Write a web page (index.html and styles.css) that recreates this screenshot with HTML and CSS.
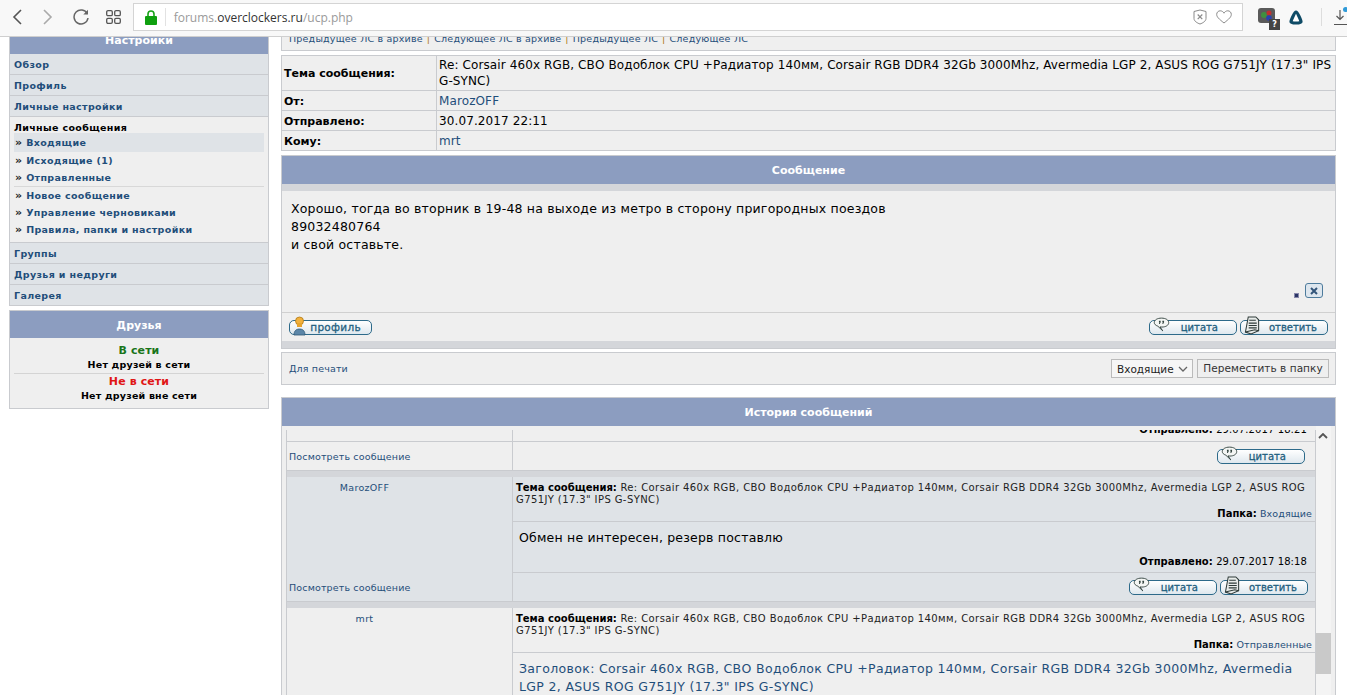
FILE: index.html
```html
<!DOCTYPE html>
<html lang="ru">
<head>
<meta charset="utf-8">
<title>forums.overclockers.ru/ucp.php</title>
<link rel="stylesheet" href="styles.css">
</head>
<body>
<svg class="defs" width="0" height="0" aria-hidden="true">
  <defs>
    <symbol id="i-quote" viewBox="0 0 20 17">
      <path d="M10 1c5 0 8.500 2.200 8.500 5.300S15 11.500 10.500 11.500c-.8 0-1.500 0-2.200-.2l3.200 4.700-5.800-5.500C3 9.500 1.500 8 1.500 6.300 1.500 3.200 5 1 10 1z" fill="#f4f6f4" stroke="#33443f" stroke-width="1.100"/>
      <path d="M7 4h2v2l-1 2H7l.5-2H7zM11 4h2v2l-1 2h-1l.5-2H11z" fill="#33443f"/>
    </symbol>
    <symbol id="i-reply" viewBox="0 0 18 20">
      <path d="M4.500 1h8l3 3v11.500l-8 3.500-6-2z" fill="#e9ecea" stroke="#2e3a38" stroke-width="1.100"/>
      <path d="M5.500 4.500h7M5 7.500h8.500M5 10h8.500M5 12.500h8.500" stroke="#2e3a38" stroke-width="1.100"/>
      <path d="M1.500 17l10-2.500 4 1" fill="none" stroke="#2e3a38" stroke-width="1.100"/>
    </symbol>
  </defs>
</svg>

<header class="chrome">
  <div class="nav">
    <svg class="nav-ico" width="14" height="16" viewBox="0 0 14 16"><path d="M11 1L4 8l7 7" fill="none" stroke="#555" stroke-width="1.600"/></svg>
    <svg class="nav-ico" width="14" height="16" viewBox="0 0 14 16"><path d="M3 1l7 7-7 7" fill="none" stroke="#aaa" stroke-width="1.600"/></svg>
    <svg class="nav-ico" width="16" height="16" viewBox="0 0 16 16"><path d="M14.300 4.800A7 7 0 1 0 15 9" fill="none" stroke="#666" stroke-width="1.500"/><path d="M15 .8v4.700h-4.700z" fill="#666"/></svg>
    <svg class="nav-ico" width="15" height="14" viewBox="0 0 15 14"><g fill="none" stroke="#555" stroke-width="1.300"><rect x=".7" y=".7" width="5.600" height="5" rx="1.300"/><rect x="8.700" y=".7" width="5.600" height="5" rx="1.300"/><rect x=".7" y="8.300" width="5.600" height="5" rx="1.300"/><rect x="8.700" y="8.300" width="5.600" height="5" rx="1.300"/></g></svg>
  </div>
  <div class="omnibox">
    <svg class="lock" width="12" height="15" viewBox="0 0 12 15"><path d="M3 7V4a3 3 0 0 1 6 0v3" fill="none" stroke="#18a318" stroke-width="1.600"/><rect y="6" width="12" height="9" rx="1" fill="#0fa00f"/></svg>
    <span class="omni-sep"></span>
    <span class="url">forums.<b>overclockers.ru</b>/ucp.php</span>
    <svg class="shield" width="14" height="16" viewBox="0 0 14 16"><path d="M1 2.500l6-1.500 6 1.500v7c0 2.500-3 4.500-6 5.500-3-1-6-3-6-5.500z" fill="none" stroke="#8a8a8a"/><path d="M4.700 5.500l4.600 4.600M9.300 5.500l-4.600 4.600" stroke="#8a8a8a" stroke-width="1.200"/></svg>
    <svg class="heart" width="16" height="14" viewBox="0 0 16 14"><path d="M8 13C3 9 .7 7 .7 4.400 .7 2.300 2.300.8 4.200.8 5.800.8 7.200 1.700 8 3.200 8.800 1.700 10.200.8 11.800.8c1.900 0 3.500 1.500 3.500 3.600C15.300 7 13 9 8 13z" fill="none" stroke="#8a8a8a"/></svg>
  </div>
  <div class="tools">
    <span class="ext">
      <svg width="17" height="16" viewBox="0 0 17 16"><rect width="17" height="15" rx="3" fill="#5a5a5a"/><circle cx="6" cy="7" r="3" fill="#3f8f3f"/><circle cx="11" cy="5" r="2.500" fill="#c03030"/><circle cx="11" cy="10" r="2.800" fill="#2840b0"/></svg>
      <span class="ext-badge">?</span>
    </span>
    <svg class="alice" width="14" height="15" viewBox="0 0 14 15"><path d="M7 2.200C5.500 2.200 2 10.500 2 11.800c0 .8 2 1.200 5 1.200s5-.4 5-1.200C12 10.500 8.500 2.200 7 2.200z" fill="#fff" stroke="#0f4b66" stroke-width="3.200" stroke-linejoin="round"/></svg>
    <span class="tool-sep"></span>
    <span class="dl">
      <svg width="14" height="17" viewBox="0 0 14 17"><path d="M7 1v9M3.500 7L7 10.500 10.500 7M1 15.500h13" fill="none" stroke="#555" stroke-width="1.200"/></svg>
      <span class="dl-dot"></span>
    </span>
  </div>
</header>

<main class="viewport">
  <div class="page">
    <aside class="sidebar">
      <section class="panel">
        <h2 class="panel-title title-settings">Настройки</h2>
        <a class="tab">Обзор</a>
        <a class="tab">Профиль</a>
        <a class="tab">Личные настройки</a>
        <div class="subtabs">
          <div class="subtitle">Личные сообщения</div>
          <a class="sub active"><i>»</i> Входящие</a>
          <a class="sub"><i>»</i> Исходящие (1)</a>
          <a class="sub sub-div"><i>»</i> Отправленные</a>
          <a class="sub"><i>»</i> Новое сообщение</a>
          <a class="sub"><i>»</i> Управление черновиками</a>
          <a class="sub"><i>»</i> Правила, папки и настройки</a>
        </div>
        <a class="tab">Группы</a>
        <a class="tab">Друзья и недруги</a>
        <a class="tab">Галерея</a>
      </section>
      <section class="panel friends">
        <h2 class="panel-title title-friends">Друзья</h2>
        <div class="friends-body">
          <div class="status on">В сети</div>
          <div class="none none-first">Нет друзей в сети</div>
          <div class="status off">Не в сети</div>
          <div class="none">Нет друзей вне сети</div>
        </div>
      </section>
    </aside>

    <div class="content">
      <div class="pm-nav"><a>Предыдущее ЛС в архиве</a><u>|</u><a>Следующее ЛС в архиве</a><u>|</u><a>Предыдущее ЛС</a><u>|</u><a>Следующее ЛС</a></div>

      <div class="meta">
        <div class="m-label m-tall">Тема сообщения:</div>
        <div class="m-val m-val-tall">Re: Corsair 460x RGB, СВО Водоблок CPU +Радиатор 140мм, Corsair RGB DDR4 32Gb 3000Mhz, Avermedia LGP 2, ASUS ROG G751JY (17.3" IPS G-SYNC)</div>
        <div class="m-label">От:</div>
        <div class="m-val"><a>MarozOFF</a></div>
        <div class="m-label">Отправлено:</div>
        <div class="m-val">30.07.2017 22:11</div>
        <div class="m-label m-last">Кому:</div>
        <div class="m-val m-last"><a>mrt</a></div>
      </div>

      <section class="msg">
        <h2 class="panel-title bar">Сообщение</h2>
        <div class="strip"></div>
        <div class="msg-body">
          <p>Хорошо, тогда во вторник в 19-48 на выходе из метро в сторону пригородных поездов<br>89032480764<br>и свой оставьте.</p>
          <div class="report"><span class="dot"></span><span class="xbtn"><svg width="10" height="8" viewBox="0 0 10 8"><path d="M2 1l6 6M8 1L2 7" stroke="#33557a" stroke-width="2"/></svg></span></div>
        </div>
        <div class="msg-foot">
          <span class="pill pill-profile"><svg class="pill-ico" width="13" height="20" viewBox="0 0 13 20"><circle cx="6.500" cy="5" r="4" fill="#f2b13c" stroke="#b07a18" stroke-width=".8"/><rect x="4" y="7" width="5" height="4" fill="#e7a42e"/><path d="M1 19c0-4 2-6 5.500-6s5.500 2 5.500 6z" fill="#5b86a8" stroke="#2f5876" stroke-width=".8"/></svg>профиль</span>
          <span class="foot-right">
            <span class="pill pill-quote"><svg class="pill-ico ico-q"><use href="#i-quote"/></svg>цитата</span>
            <span class="pill pill-reply"><svg class="pill-ico"><use href="#i-reply"/></svg>ответить</span>
          </span>
        </div>
        <div class="strip strip-b"></div>
      </section>

      <div class="print">
        <a class="small-link">Для печати</a>
        <span class="print-right">
          <span class="select">Входящие<svg width="10" height="6" viewBox="0 0 10 6"><path d="M1 1l4 4 4-4" fill="none" stroke="#666" stroke-width="1.300"/></svg></span>
          <span class="move">Переместить в папку</span>
        </span>
      </div>

      <section class="history">
        <h2 class="panel-title bar">История сообщений</h2>
        <div class="hist-frame">
          <div class="hist-scroll">
            <div class="hist-inner">
              <div class="h-row h-cut"><div class="h-l"></div><div class="h-r"><div class="h-date">Отправлено: <span>29.07.2017 18:21</span></div></div></div>
              <div class="h-row h-act"><div class="h-l"><a class="small-link">Посмотреть сообщение</a></div><div class="h-r h-btns h-btns-a"><span class="pill pill-quote"><svg class="pill-ico ico-q"><use href="#i-quote"/></svg>цитата</span></div></div>
              <div class="h-gap"></div>

              <div class="h-row h-alt">
                <div class="h-l h-user"><a>MarozOFF</a></div>
                <div class="h-r">
                  <div class="h-subj"><b>Тема сообщения:</b> Re: Corsair 460x RGB, СВО Водоблок CPU +Радиатор 140мм, Corsair RGB DDR4 32Gb 3000Mhz, Avermedia LGP 2, ASUS ROG G751JY (17.3" IPS G-SYNC)</div>
                  <div class="h-folder"><b>Папка:</b> <a>Входящие</a></div>
                  <div class="h-text">Обмен не интересен, резерв поставлю</div>
                  <div class="h-date h-date-b">Отправлено: <span>29.07.2017 18:18</span></div>
                </div>
              </div>
              <div class="h-row h-act h-alt"><div class="h-l"><a class="small-link">Посмотреть сообщение</a></div><div class="h-r h-btns"><span class="pill pill-quote pill-quote-gap"><svg class="pill-ico ico-q"><use href="#i-quote"/></svg>цитата</span><span class="pill pill-reply"><svg class="pill-ico"><use href="#i-reply"/></svg>ответить</span></div></div>
              <div class="h-gap"></div>

              <div class="h-row">
                <div class="h-l h-user"><a>mrt</a></div>
                <div class="h-r">
                  <div class="h-subj"><b>Тема сообщения:</b> Re: Corsair 460x RGB, СВО Водоблок CPU +Радиатор 140мм, Corsair RGB DDR4 32Gb 3000Mhz, Avermedia LGP 2, ASUS ROG G751JY (17.3" IPS G-SYNC)</div>
                  <div class="h-folder"><b>Папка:</b> <a>Отправленные</a></div>
                  <div class="h-text h-link"><a>Заголовок: Corsair 460x RGB, СВО Водоблок CPU +Радиатор 140мм, Corsair RGB DDR4 32Gb 3000Mhz, Avermedia LGP 2, ASUS ROG G751JY (17.3" IPS G-SYNC)</a></div>
                </div>
              </div>
            </div>
          </div>
          <div class="scrollbar">
            <svg class="sb-up" width="10" height="6" viewBox="0 0 10 6"><path d="M1 5l4-4 4 4" fill="none" stroke="#555" stroke-width="1.800"/></svg>
            <div class="sb-thumb"></div>
          </div>
        </div>
      </section>
    </div>
  </div>
</main>
</body>
</html>
```

FILE: styles.css
```css
* { box-sizing: border-box; }
html, body { margin: 0; padding: 0; height: 100%; overflow: hidden; background: #fff; }
body { font-family: "DejaVu Sans", Verdana, sans-serif; color: #000; display: flex; flex-direction: column; }
a { color: #1f4e7a; text-decoration: none; }
h2, p { margin: 0; }
.defs { position: absolute; }

/* browser chrome */
.chrome { flex: 0 0 37px; height: 37px; display: flex; align-items: flex-start; background: #f8f8f8; border-bottom: 1px solid #cfcfcf; }
.nav { width: 133px; height: 34px; display: flex; align-items: center; padding-left: 10px; }
.nav-ico:nth-child(1) { margin-right: 17px; }
.nav-ico:nth-child(2) { margin-right: 18px; }
.nav-ico:nth-child(3) { margin-right: 17px; }
.omnibox { margin-top: 3px; width: 1113px; height: 28px; background: #fff; border: 1px solid #d4d4d4; display: flex; align-items: center; padding-left: 11px; }
.omni-sep { width: 1px; height: 18px; background: #e2e2e2; margin: 0 8px; }
.url { font-family: "Open Sans", sans-serif; font-size: 12px; color: #9a9a9a; flex: 1; }
.url b { font-weight: 400; color: #333; }
.shield { margin-right: 9px; }
.heart { margin-right: 10px; }
.tools { flex: 1; display: flex; align-items: center; height: 34px; padding-left: 15px; }
.ext { position: relative; display: block; width: 17px; height: 16px; margin-top: -3px; }
.ext svg { display: block; }
.ext-badge { position: absolute; left: 11px; top: 11px; width: 11px; height: 11px; background: #444; color: #fff; font: bold 8px/11px "DejaVu Sans", sans-serif; text-align: center; }
.alice { margin-left: 14px; margin-top: 1px; }
.tool-sep { width: 1px; height: 18px; background: #ddd; margin: 0 11px 0 18px; }
.dl { position: relative; display: block; width: 14px; height: 17px; }
.dl svg { display: block; }
.dl-dot { position: absolute; left: 10px; top: -2px; width: 5px; height: 5px; border-radius: 50%; background: #2f9ad8; }

/* layout */
.viewport { flex: 1; overflow: hidden; }
.page { display: flex; align-items: flex-start; gap: 12px; padding: 0 11px 0 9px; margin-top: -7px; }
.sidebar { flex: 0 0 260px; }
.content { flex: 1; min-width: 0; }

.panel { border: 1px solid #c9cbcf; background: #efefef; }
.panel-title { background: #8c9dc0; color: #fff; font-size: 11px; font-weight: 700; text-align: center; }
.title-settings { height: 23px; line-height: 20px; }
.title-friends { height: 27px; line-height: 29px; }

.tab { display: block; height: 21px; line-height: 22px; padding-left: 4px; background: #dfe3e7; border-bottom: 1px solid #c9cbcf; font-size: 9.5px; font-weight: 700; letter-spacing: .35px; color: #1f4e7a; }
.tab:last-child { border-bottom: 0; height: 20px; }
.subtabs { padding: 5px 4px 0; height: 126px; border-bottom: 1px solid #c9cbcf; background: #efefef; }
.subtitle { height: 11px; line-height: 11px; font-size: 9.5px; font-weight: 700; letter-spacing: .35px; }
.sub { display: block; height: 17px; line-height: 17px; padding-left: 1px; font-size: 9.5px; font-weight: 700; letter-spacing: .35px; color: #1f4e7a; }
.sub i { font-style: normal; color: #222; font-size: 11px; }
.sub.active { height: 19px; line-height: 19px; background: #dfe3e7; }
.sub-div { border-bottom: 1px solid #d8d8d8; height: 18px; }

.friends { margin-top: 4px; }
.friends-body { height: 70px; padding: 4px 4px 0; text-align: center; }
.status { font-size: 11px; font-weight: 700; line-height: 15px; height: 15px; letter-spacing: .1px; }
.on { color: #1a751a; margin-top: 1px; }
.off { color: #e01616; }
.none { font-size: 9.5px; font-weight: 700; line-height: 13px; height: 15px; letter-spacing: .2px; }
.none-first { height: 16px; border-bottom: 1px solid #d4d4d4; }

/* right column */
.pm-nav { height: 21px; padding: 3px 0 0 7px; background: #efefef; border: 1px solid #c9cbcf; font-size: 9.5px; line-height: 9px; letter-spacing: .2px; white-space: nowrap; overflow: hidden; }
.pm-nav u { text-decoration: none; color: #b07a18; margin: 0 4px; }
.meta { margin-top: 4px; display: grid; grid-template-columns: 154px 1fr; border: 1px solid #c9cbcf; background: #efefef; }
.m-label, .m-val { border-bottom: 1px solid #c9cbcf; padding: 1px 2px 0; height: 20px; line-height: 19px; }
.m-label { font-size: 11px; font-weight: 700; }
.m-val { font-size: 12px; letter-spacing: .11px; border-left: 1px solid #c9cbcf; }
.m-val-tall { height: 35px; line-height: 16px; }
.m-tall { height: 35px; line-height: 33px; }
.m-label.m-last, .m-val.m-last { border-bottom: 0; height: 19px; }

.msg { margin-top: 4px; border: 1px solid #c9cbcf; background: #efefef; }
.bar { height: 28px; line-height: 29px; }
.strip { height: 7px; background: #d4d6da; }
.msg-body { height: 122px; padding: 9px 9px 0; display: flex; flex-direction: column; border-bottom: 1px solid #d0d0d0; }
.msg-body p { font-size: 12.5px; line-height: 18px; letter-spacing: .2px; flex: 1; }
.report { display: flex; justify-content: flex-end; align-items: flex-end; gap: 6px; padding: 0 12px 14px 0; margin-right: -9px; }
.dot { width: 5px; height: 5px; background: #2a3566; border: 1px solid #88a; }
.xbtn { width: 18px; height: 15px; border: 1px solid #4d7b9c; border-radius: 3px; background: #dde6ee; display: flex; align-items: center; justify-content: center; }
.msg-foot { height: 28px; display: flex; justify-content: space-between; align-items: center; padding: 0 7px; }
.foot-right { display: flex; gap: 3px; margin-top: 1px; }
.strip-b { height: 7px; }

.pill { position: relative; display: inline-block; height: 15px; border: 1px solid #2d6a8a; border-radius: 5px; background: linear-gradient(#fff, #dfe8ee); font-size: 10px; line-height: 13px; color: #1f5f80; -webkit-text-stroke: .3px #1f5f80; text-align: right; white-space: nowrap; }
.pill-ico { position: absolute; left: 3px; bottom: -1px; width: 17px; height: 19px; overflow: visible; }
.ico-q { left: 3px; bottom: 2px; width: 17px; height: 15px; }
.pill-profile { width: 83px; padding-right: 10px; margin-top: 1px; font-size: 10.5px; letter-spacing: .3px; }
.pill-profile .pill-ico { width: 13px; height: 20px; left: 3px; bottom: -2px; }
.pill-quote { width: 88px; padding-right: 18px; }
.pill-reply { width: 88px; padding-right: 10px; }
.pill-quote-gap { margin-right: 3px; }

.print { margin-top: 3px; height: 33px; border: 1px solid #c9cbcf; background: #efefef; display: flex; justify-content: space-between; align-items: center; padding: 0 6px 0 7px; }
.small-link { font-size: 9.5px; letter-spacing: .15px; }
.print-right { display: flex; gap: 4px; }
.select { width: 82px; height: 19px; background: #f6f6f6; border: 1px solid #bbb; font-size: 10.5px; padding: 0 4px 0 5px; color: #222; display: flex; align-items: center; justify-content: space-between; }
.move { width: 132px; height: 19px; background: #efefef; border: 1px solid #bbb; font-size: 10.5px; line-height: 17px; letter-spacing: .05px; text-align: center; color: #333; }

.history { margin-top: 12px; border: 1px solid #c9cbcf; border-bottom: 0; background: #efefef; }
.hist-frame { display: flex; height: 269px; padding-left: 4px; background: #efefef; }
.hist-scroll { flex: 1; overflow: hidden; margin-top: 4px; }
.hist-inner { border-right: 1px solid #c9cbcf; border-left: 1px solid #c9cbcf; }
.h-row { display: grid; grid-template-columns: 226px minmax(0, 1fr); background: #efefef; }
.h-alt { background: #dfe3e7; }
.h-l { border-right: 1px solid #c9cbcf; }
.h-cut { height: 12px; overflow: hidden; border-bottom: 1px solid #c9cbcf; }
.h-act { height: 29px; border-bottom: 1px solid #c9cbcf; align-items: stretch; }
.h-act .h-l { display: flex; align-items: center; padding-left: 2px; }
.h-btns { display: flex; justify-content: flex-end; align-items: center; padding: 0 7px 0 0; }
.h-btns-a { padding-right: 10px; }
.h-gap { height: 6px; background: #d4d6da; }
.h-user { text-align: center; font-size: 9.5px; letter-spacing: .3px; padding: 5px 70px 0 0; }
.h-subj { height: 32px; padding: 5px 3px 0; font-size: 10px; line-height: 12px; letter-spacing: .4px; color: #222; }
.h-subj b { letter-spacing: 0; color: #000; }
.h-folder { height: 13px; padding-right: 3px; border-bottom: 1px solid #c9cbcf; text-align: right; font-size: 9.5px; line-height: 10px; letter-spacing: .1px; }
.h-folder b { font-size: 10px; letter-spacing: 0; }
.h-text { font-size: 12.5px; line-height: 18px; padding: 7px 6px 0; letter-spacing: .2px; height: 32px; }
.h-text.h-link { height: auto; letter-spacing: .34px; }
.h-link a { color: #1f4e7a; }
.h-date { text-align: right; font-size: 10px; font-weight: 700; padding-right: 8px; margin-top: -6px; }
.h-date span { font-weight: 400; letter-spacing: .1px; }
.h-date-b { margin-top: 0; height: 19px; padding-top: 2px; border-bottom: 1px solid #c9cbcf; }

.scrollbar { position: relative; flex: 0 0 19px; border-right: 4px solid #efefef; background: #f4f4f4; }
.sb-up { position: absolute; left: 2px; top: 7px; }
.sb-thumb { position: absolute; left: 0; right: 0; top: 207px; height: 41px; background: #c9c9c9; }
```
